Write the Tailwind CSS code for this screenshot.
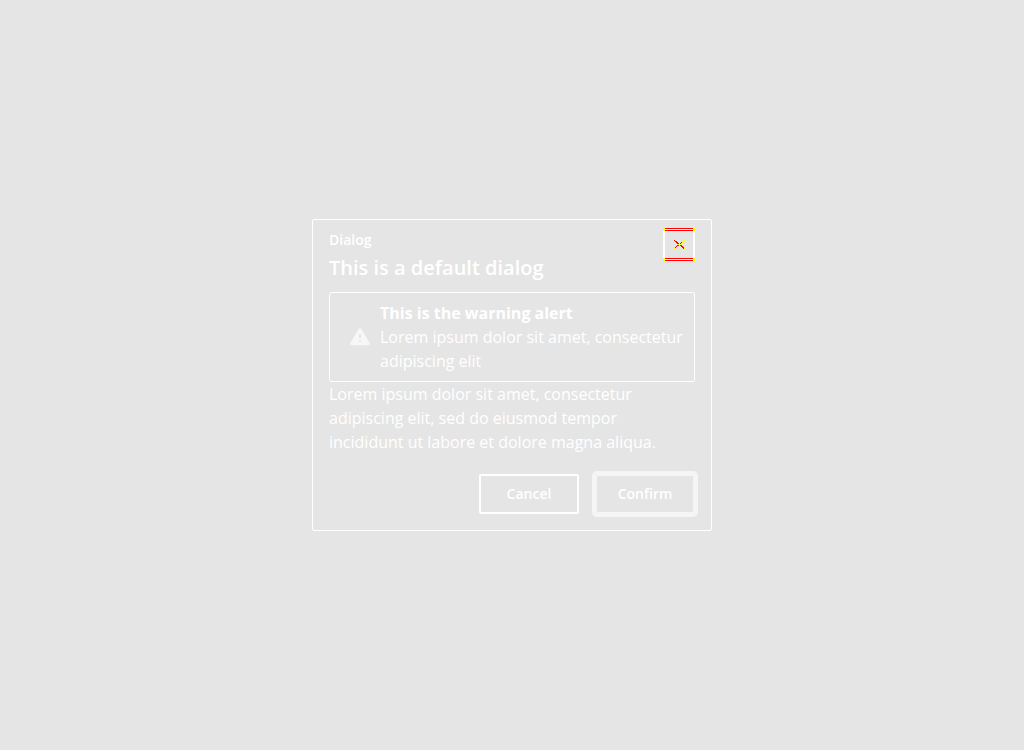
<!DOCTYPE html>
<html lang="en">
<head>
<meta charset="utf-8">
<title>Dialog</title>
<script src="https://cdn.jsdelivr.net/npm/@tailwindcss/browser@4"></script>
</head>
<body class="flex min-h-screen items-center justify-center bg-[#e5e5e5] font-['Open_Sans',sans-serif] text-white">
<section role="dialog" aria-modal="true" aria-labelledby="title" class="w-full max-w-[400px] rounded-xs border border-white">
  <header class="flex items-start justify-between px-4 pt-2">
    <div>
      <p class="text-sm leading-6 font-semibold">Dialog</p>
      <h1 id="title" class="text-xl leading-8 font-semibold">This is a default dialog</h1>
    </div>
    <button type="button" aria-label="Close" class="h-[33px] w-8">
      <svg class="block" width="32" height="33" viewBox="0 0 32 33" shape-rendering="crispEdges">
        <path fill="#fff" d="M0 3h2v27H0zM30 3h2v27h-2zM2 1h28v1H2zM2 31h28v1H2z"/>
        <path fill="#f00" d="M2 0h28v1H2zM2 2h28v1H2zM2 30h28v1H2zM2 32h28v1H2z"/>
        <path fill="#ff0" d="M0 0h2v3H0zM30 0h2v3h-2zM0 30h2v3H0zM30 30h2v3h-2z"/>
        <path fill="#ff0" d="M11 12h2v1h-2zM11 13h3v1h-3zM12 14h3v1h-3zM13 15h3v1h-3zM15 16h3v1h-3zM13 17h3v1h-3zM12 18h3v1h-3zM11 19h3v1h-3zM11 20h2v1h-2zM20 12h2v1h-2zM19 13h3v1h-3zM18 14h3v1h-3zM17 15h3v1h-3zM17 17h3v1h-3zM18 18h3v1h-3zM19 19h3v1h-3zM20 20h2v1h-2z"/>
        <path fill="#f00" d="M11 12h1v1h-1zM12 13h2v1h-2zM13 14h2v1h-2zM14 15h2v1h-2zM18 14h1v1h-1zM17 15h1v1h-1zM14 17h2v1h-2zM13 18h1v1h-1zM12 19h1v1h-1zM17 17h2v1h-2zM18 18h2v1h-2zM19 19h2v1h-2zM20 20h1v1h-1z"/>
      </svg>
    </button>
  </header>
  <div class="px-4 pt-2">
    <div role="alert" class="flex items-center rounded-l-[3px] rounded-r-xs border border-white py-2 pr-2 pl-5 leading-6">
      <svg class="mr-2.5 shrink-0" width="20" height="20" viewBox="0 0 20 20"><path fill="#fff" fill-opacity=".7" fill-rule="evenodd" d="M8.700 1.800Q10 0 11.300 1.800L19.600 16Q20.300 18 18.300 18.300H1.700Q-.3 18 .4 16ZM9 7v4h2V7ZM9 13v2h2v-2Z"/></svg>
      <div><strong class="font-bold">This is the warning alert</strong><p>Lorem ipsum dolor sit amet, consectetur adipiscing elit</p></div>
    </div>
    <p class="leading-6">Lorem ipsum dolor sit amet, consectetur adipiscing elit, sed do eiusmod tempor incididunt ut labore et dolore magna aliqua.</p>
  </div>
  <footer class="flex justify-end gap-4 p-4 pt-5">
    <button type="button" class="h-10 w-[100px] rounded-xs border-2 border-white text-sm font-semibold">Cancel</button>
    <button type="button" class="h-10 w-[100px] rounded-xs border-2 border-[#f5f5f5] text-sm font-semibold ring-3 ring-[#f5f5f5]">Confirm</button>
  </footer>
</section>
</body>
</html>
